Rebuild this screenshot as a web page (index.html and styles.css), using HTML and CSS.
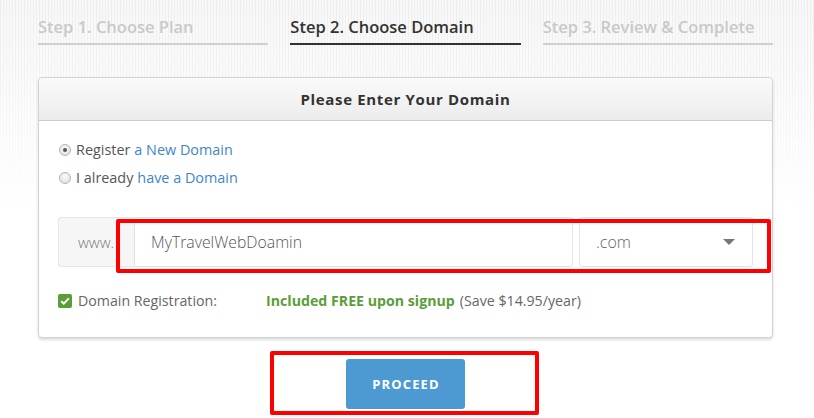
FILE: index.html
```html
<!DOCTYPE html>
<html>
<head>
<meta charset="utf-8">
<link rel="stylesheet" href="styles.css">
</head>
<body>
<div class="page">
  <div class="steps">
    <div class="step">Step 1. Choose Plan</div>
    <div class="step active">Step 2. Choose Domain</div>
    <div class="step">Step 3. Review &amp; Complete</div>
  </div>

  <div class="card">
    <div class="card-header">Please Enter Your Domain</div>
    <div class="card-body">
      <label class="radio-row"><span class="radio checked"></span>Register <a class="link">a New Domain</a></label>
      <label class="radio-row second"><span class="radio"></span>I already <a class="link">have a Domain</a></label>

      <div class="input-group">
        <div class="addon">www.</div>
        <div class="domain-input">MyTravelWebDoamin</div>
        <div class="tld-select"><span>.com</span><span class="caret"></span></div>
      </div>

      <div class="check-row">
        <span class="checkbox"><svg width="10" height="8" viewBox="0 0 10 8"><path d="M1.2 4.2 L3.8 6.6 L8.8 1.4" fill="none" stroke="#fff" stroke-width="2"/></svg></span>
        <span class="check-label">Domain Registration:</span>
        <span class="free">Included FREE upon signup</span>
        <span class="save">(Save $14.95/year)</span>
      </div>
    </div>
  </div>

  <div class="actions">
    <button class="proceed">PROCEED</button>
  </div>
</div>

<div class="highlight hl-domain"></div>
<div class="highlight hl-button"></div>
</body>
</html>
```

FILE: styles.css
```css
html, body {
  margin: 0;
  padding: 0;
}
body {
  position: relative;
  width: 814px;
  height: 418px;
  overflow: hidden;
  font-family: "Open Sans", "Liberation Sans", sans-serif;
  color: #555;
  background:
    linear-gradient(to bottom, rgba(255,255,255,0) 0px, rgba(255,255,255,0.4) 90px, #fff 210px),
    repeating-linear-gradient(90deg, #ededed 0px, #ededed 1px, #f8f8f8 1px, #f8f8f8 3px);
}
.page {
  width: 735px;
  margin-left: 38px;
  padding-top: 16px;
}
.steps {
  display: grid;
  grid-template-columns: repeat(3, 1fr);
  column-gap: 22px;
}
.step {
  font-size: 16.5px;
  font-weight: 600;
  line-height: 22px;
  color: #c9c9c9;
  padding-bottom: 5px;
  border-bottom: 2px solid #cfcfcf;
  white-space: nowrap;
}
.step.active {
  color: #333;
  border-bottom-color: #333;
}
.card {
  margin-top: 32px;
  background: #fff;
  border: 1px solid #d2d2d2;
  border-radius: 4px;
  box-shadow: 0 2px 3px rgba(0,0,0,0.14);
}
.card-header {
  height: 42px;
  line-height: 42px;
  text-align: center;
  font-size: 15px;
  font-weight: 700;
  letter-spacing: 0.65px;
  color: #333;
  background: linear-gradient(to bottom, #fafafa, #ececec);
  border-bottom: 1px solid #cdcdcd;
  border-radius: 4px 4px 0 0;
}
.card-body {
  padding: 19px 19px 26px 19px;
}
.radio-row {
  display: flex;
  align-items: center;
  font-size: 14.4px;
  line-height: 20px;
  color: #555;
}
.radio-row.second {
  margin-top: 8px;
}
.radio {
  width: 10px;
  height: 10px;
  border-radius: 50%;
  border: 1px solid #b4b4b4;
  background: radial-gradient(circle at 50% 35%, #fafafa, #dcdcdc);
  margin: 0 5px 0 1px;
  position: relative;
  box-sizing: content-box;
}
.radio.checked::after {
  content: "";
  position: absolute;
  left: 3px;
  top: 3px;
  width: 4px;
  height: 4px;
  border-radius: 50%;
  background: #555;
}
.link {
  color: #3f86c8;
  margin-left: 4px;
}
.input-group {
  margin-top: 29px;
  display: flex;
  height: 50px;
}
.addon {
  width: 76px;
  box-sizing: border-box;
  background: #f6f6f6;
  border: 1px solid #e6e6e6;
  border-right: none;
  border-radius: 3px 0 0 3px;
  font-size: 15px;
  font-weight: 300;
  color: #777;
  line-height: 48px;
  padding-left: 19px;
}
.domain-input {
  flex: 1;
  box-sizing: border-box;
  border: 1px solid #e3e3e3;
  border-radius: 0 3px 3px 0;
  font-size: 15.8px;
  font-weight: 300;
  color: #555;
  line-height: 48px;
  padding-left: 16px;
}
.tld-select {
  width: 174px;
  margin-left: 6px;
  box-sizing: border-box;
  border: 1px solid #e3e3e3;
  border-radius: 3px;
  font-size: 16px;
  font-weight: 300;
  color: #666;
  line-height: 48px;
  padding: 0 17px 0 16px;
  display: flex;
  justify-content: space-between;
  align-items: center;
}
.caret {
  width: 0;
  height: 0;
  border-left: 6px solid transparent;
  border-right: 6px solid transparent;
  border-top: 6px solid #777;
}
.check-row {
  margin-top: 24px;
  display: flex;
  align-items: center;
  font-size: 14.2px;
  line-height: 20px;
}
.checkbox {
  width: 14px;
  height: 14px;
  background: #5a9e3a;
  border-radius: 2px;
  display: flex;
  align-items: center;
  justify-content: center;
  margin-right: 6px;
}
.check-label {
  width: 188px;
  color: #666;
}
.free {
  color: #5a9e3a;
  font-weight: 700;
  margin-right: 5px;
}
.save {
  color: #666;
}
.actions {
  display: flex;
  justify-content: center;
  margin-top: 21px;
}
.proceed {
  width: 119px;
  height: 50px;
  border: none;
  border-radius: 3px;
  background: #4d9ad2;
  color: #fff;
  font-family: "Open Sans", "Liberation Sans", sans-serif;
  font-size: 13px;
  font-weight: 700;
  letter-spacing: 1.1px;
  padding: 0 0 0 1px;
}
.highlight {
  position: absolute;
  border: 4px solid #ff0000;
  box-sizing: border-box;
  border-radius: 2px;
}
.hl-domain {
  left: 116px;
  top: 219px;
  width: 655px;
  height: 54px;
}
.hl-button {
  left: 270px;
  top: 351px;
  width: 269px;
  height: 64px;
}
```
